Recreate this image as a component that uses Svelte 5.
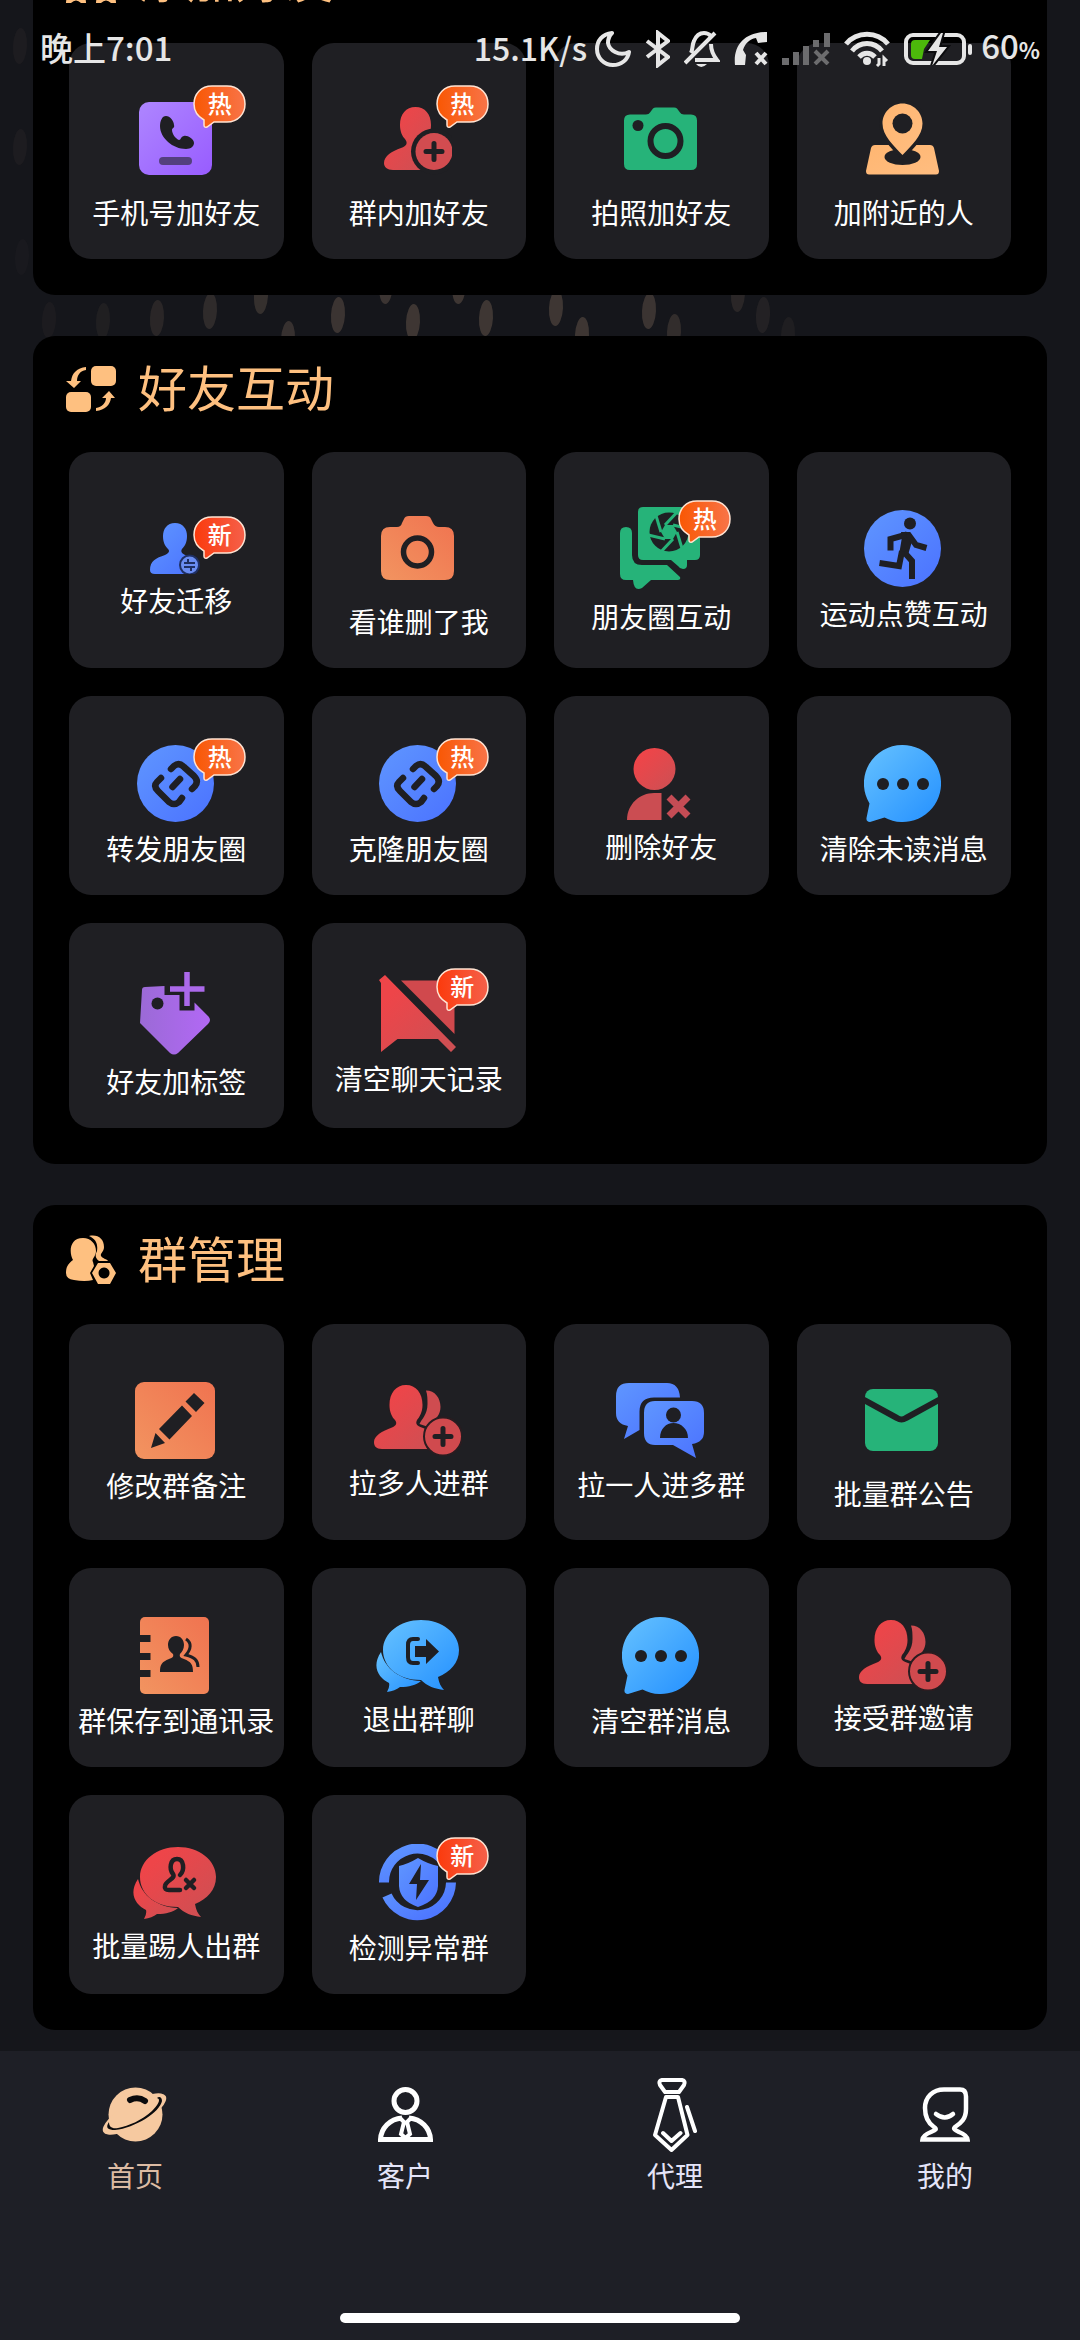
<script lang="ts">
	import { onMount } from 'svelte';

	type Tool = { icon: string; label: string; w: number; h: number; badge?: string };
	type Section = { title: string; icon: string; iconHeight: number; tools: Tool[] };

	const sections: Section[] = [
		{
			title: '添加好友',
			icon: 'add',
			iconHeight: 46,
			tools: [
				{ icon: 'phone', label: '手机号加好友', w: 73, h: 94, badge: '热' },
				{ icon: 'person-add', label: '群内加好友', w: 68, h: 94, badge: '热' },
				{ icon: 'camera-green', label: '拍照加好友', w: 73, h: 94 },
				{ icon: 'nearby', label: '加附近的人', w: 73, h: 94 }
			]
		},
		{
			title: '好友互动',
			icon: 'interact',
			iconHeight: 46,
			tools: [
				{ icon: 'migrate', label: '好友迁移', w: 50, h: 51, badge: '新' },
				{ icon: 'camera-orange', label: '看谁删了我', w: 73, h: 94 },
				{ icon: 'moments', label: '朋友圈互动', w: 80, h: 83, badge: '热' },
				{ icon: 'run', label: '运动点赞互动', w: 77, h: 77 },
				{ icon: 'link', label: '转发朋友圈', w: 77, h: 77, badge: '热' },
				{ icon: 'link', label: '克隆朋友圈', w: 77, h: 77, badge: '热' },
				{ icon: 'person-delete', label: '删除好友', w: 67, h: 72 },
				{ icon: 'message', label: '清除未读消息', w: 77, h: 77 },
				{ icon: 'tag', label: '好友加标签', w: 70, h: 83 },
				{ icon: 'chat-off', label: '清空聊天记录', w: 77, h: 77, badge: '新' }
			]
		},
		{
			title: '群管理',
			icon: 'manage',
			iconHeight: 49,
			tools: [
				{ icon: 'edit', label: '修改群备注', w: 80, h: 77 },
				{ icon: 'group-add', label: '拉多人进群', w: 88, h: 71 },
				{ icon: 'group-pull', label: '拉一人进多群', w: 88, h: 75 },
				{ icon: 'mail', label: '批量群公告', w: 75, h: 94 },
				{ icon: 'book', label: '群保存到通讯录', w: 71, h: 77 },
				{ icon: 'exit', label: '退出群聊', w: 83, h: 72 },
				{ icon: 'message', label: '清空群消息', w: 77, h: 77 },
				{ icon: 'group-add', label: '接受群邀请', w: 88, h: 71 },
				{ icon: 'kick', label: '批量踢人出群', w: 85, h: 72 },
				{ icon: 'shield', label: '检测异常群', w: 77, h: 77, badge: '新' }
			]
		}
	];

	const tabs = [
		{ id: 'home', label: '首页', w: 67, h: 55 },
		{ id: 'client', label: '客户', w: 55, h: 55 },
		{ id: 'agent', label: '代理', w: 44, h: 74 },
		{ id: 'me', label: '我的', w: 50, h: 55 }
	];

	// x, y, opacity of the soft marks behind the panels
	const marks = [
		[20, 46, 0.06], [20, 147, 0.06], [22, 257, 0.03],
		[49, 320, 0.05], [103, 321, 0.08], [157, 318, 0.14], [210, 311, 0.18],
		[261, 296, 0.22], [288, 339, 0.24], [338, 315, 0.26], [386, 286, 0.26],
		[413, 322, 0.28], [459, 286, 0.28], [486, 318, 0.28], [556, 308, 0.28],
		[582, 335, 0.28], [649, 311, 0.26], [674, 332, 0.2], [738, 294, 0.14],
		[763, 315, 0.1], [788, 335, 0.07]
	];

	const blades = [0, 1, 2, 3, 4, 5].map((k) => {
		const a = (k * Math.PI) / 3;
		const b = a + 0.9;
		return {
			x1: 49 + 8 * Math.cos(a),
			y1: 25 + 8 * Math.sin(a),
			x2: 49 + 21 * Math.cos(b),
			y2: 25 + 21 * Math.sin(b)
		};
	});

	let active = $state('home');
	let content: HTMLElement;

	onMount(() => {
		content.scrollTop = content.scrollHeight;
	});
</script>

<svg class="defs" width="0" height="0" aria-hidden="true">
	<defs>
		<linearGradient id="purple" x1="0" y1="0" x2="1" y2="1">
			<stop offset="0" stop-color="#ae86ff" /><stop offset="1" stop-color="#985cff" />
		</linearGradient>
		<linearGradient id="red" x1="0" y1="0" x2="1" y2="1">
			<stop offset="0.2" stop-color="#ee4549" /><stop offset="1" stop-color="#cb5054" />
		</linearGradient>
		<linearGradient id="blue" x1="0" y1="0" x2="1" y2="1">
			<stop offset="0" stop-color="#5f96ff" /><stop offset="1" stop-color="#4b72ff" />
		</linearGradient>
		<linearGradient id="sky" x1="0" y1="0" x2="1" y2="1">
			<stop offset="0" stop-color="#66c2ff" /><stop offset="1" stop-color="#2490ff" />
		</linearGradient>
		<linearGradient id="orange" x1="0" y1="1" x2="1" y2="0">
			<stop offset="0" stop-color="#f29460" /><stop offset="1" stop-color="#f07350" />
		</linearGradient>
		<linearGradient id="peach" x1="0" y1="0" x2="1" y2="1">
			<stop offset="0" stop-color="#ffb671" /><stop offset="1" stop-color="#ffbd80" />
		</linearGradient>
		<linearGradient id="violet" x1="0" y1="0" x2="1" y2="0">
			<stop offset="0" stop-color="#9b6ad6" /><stop offset="1" stop-color="#b268f5" />
		</linearGradient>
		<linearGradient id="hot" x1="0" y1="0" x2="1" y2="0">
			<stop offset="0" stop-color="#f95703" /><stop offset="1" stop-color="#f87448" />
		</linearGradient>
		<linearGradient id="new" x1="0" y1="0" x2="1" y2="0">
			<stop offset="0" stop-color="#fb3a0c" /><stop offset="1" stop-color="#f5604a" />
		</linearGradient>
	</defs>
</svg>

{#snippet bubbles(fill: string)}
	<path {fill} d="M5 32C-5 47 3 58 13 63q1 4-2 9 8-1 13-5c9 0 16-2 21-6C24 60 9 49 5 32z" />
	<path
		{fill}
		d="M45 0c21 0 38 13 38 30 0 13-9 22-21 27 1 6 3 10 6 13-9-1-17-4-23-10C22 60 7 47 7 30S24 0 45 0z"
	/>
{/snippet}

{#snippet toolIcon(name: string)}
	{#if name === 'phone'}
		<rect y="10" width="73" height="73" rx="10" fill="url(#purple)" />
		<path
			class="cut"
			d="M27 24c-4 0-6 5-6 10 0 12 13 23 26 23 5 0 8-3 8-6 0-4-7-8-10-7-3 0-3 4-5 4-3-1-7-6-7-10 0-2 3-2 2-5 0-4-4-9-8-9z"
		/>
		<rect x="20" y="65" width="33" height="8" rx="4" fill="#54407e" />
	{:else if name === 'person-add'}
		<path
			fill="url(#red)"
			d="M31.500 15C41 15 47 22 47 33c0 8-3 12-6 16l-3 29H9c-6 0-9-3-9-7 0-7 8-12 17-15 6-2 7-5 4-9-3-3-5-8-5-14 0-11 6-18 15.500-18z"
		/>
		<circle class="cut" cx="50" cy="59.500" r="23" />
		<circle cx="50" cy="59.500" r="18.500" fill="#d24c50" />
		<path class="cut-line" stroke-width="5" d="M42 59.500h16M50 51.500v16" />
	{:else if name === 'camera-green'}
		<path
			fill="#26b379"
			d="M6 22.500h16q3 0 4-2l3-4q1-1 3-1h18q2 0 3 1l3 4q1 2 4 2h7q6 0 6 6V72q0 6-6 6H6q-6 0-6-6V28.500q0-6 6-6z"
		/>
		<circle class="cut" cx="14" cy="33.500" r="5.500" />
		<circle class="cut-line" cx="41.500" cy="49" r="15" stroke-width="6" />
	{:else if name === 'nearby'}
		<path fill="url(#peach)" d="M9 53h55q3 0 4 3l5 23q0 3.500-3 3.500H3q-3 0-3-3.500l5-23q1-3 4-3z" />
		<ellipse class="cut" cx="36.500" cy="65" rx="18" ry="8" />
		<path
			fill="url(#peach)"
			stroke="#1f1f23"
			stroke-width="7"
			paint-order="stroke"
			d="M36.500 11.500c11 0 20 9 20 20 0 12-11 22-20 31.500-9-9.500-20-19.500-20-31.500 0-11 9-20 20-20z"
		/>
		<circle class="cut" cx="36.500" cy="31.500" r="10" />
	{:else if name === 'migrate'}
		<path
			fill="url(#blue)"
			d="M25 0c8 0 12 6 12 13 0 6-2 10-5 13-2 3 1 5 3 6 8 3 11 6 12 11l-4 8H5q-5 0-5-4c0-9 6-12 15-15 4-2 5-4 3-6-3-3-5-7-5-13C13 6 17 0 25 0z"
		/>
		<circle cx="39.500" cy="42" r="9.500" fill="#6a8df2" stroke="#1f2f62" stroke-width="2" />
		<path fill="none" stroke="#1f2f62" stroke-width="2" d="M34 40h11M38 36v4M34 44h11M41 44v4" />
	{:else if name === 'camera-orange'}
		<path
			fill="url(#orange)"
			d="M9 26h7q4 0 5-4l2-4q1-3 5-3h17q4 0 5 3l2 4q2 4 6 4h6q9 0 9 9v35q0 9-9 9H9q-9 0-9-9V35q0-9 9-9z"
		/>
		<circle class="cut-line" cx="36.500" cy="51" r="14" stroke-width="5.500" />
	{:else if name === 'moments'}
		<g fill="#26b379">
			<path d="M23 0h52q5 0 5 5v43q0 5-5 5h-8v5q0 4-4 4-3 0-5-3l-7-6H23q-5 0-5-5V5q0-5 5-5z" />
			<path
				d="M6 20q6 0 6 6v22q0 10 10 10h25l13 12q1 3-2 3H31l-9 8q-8 4-9-8H6q-6 0-6-6V26q0-6 6-6z"
			/>
		</g>
		<circle class="cut" cx="49" cy="25" r="19.500" />
		<path fill="#26b379" d="M57 25l-4 7h-8l-4-7 4-7h8z" />
		{#each blades as b}
			<line x1={b.x1} y1={b.y1} x2={b.x2} y2={b.y2} stroke="#26b379" stroke-width="3" />
		{/each}
	{:else if name === 'run'}
		<circle cx="38.500" cy="38.500" r="38.500" fill="url(#blue)" />
		<circle class="cut" cx="46" cy="13.500" r="6" />
		<path class="cut" d="M37 22h9l3 6-5 17h-9l3-18z" />
		<g fill="none" stroke="#1f1f23" stroke-width="6">
			<path d="M43 24.500L26.500 29v11.500" />
			<path d="M44 24l8 11 10.500 3" />
			<path d="M40 42l8 9v18" />
			<path d="M38 41l-3 15-19.500-3" />
		</g>
	{:else if name === 'link'}
		<circle cx="38.500" cy="38.500" r="38.500" fill="url(#blue)" />
		<g class="cut-line" stroke-width="6.500">
			<path d="M34 24l3-3q5-4 10 1l10 9q5 5 1 10l-3 3" />
			<path d="M24 33l-4 4q-4 4 1 9l11 11q5 4 10 0l3-4" />
			<path d="M35.500 42l7.500-8" />
		</g>
	{:else if name === 'person-delete'}
		<circle cx="27.500" cy="21" r="21" fill="url(#red)" />
		<path fill="#cb4d52" d="M0 72c0-16 13-27 27-27h7.500v27z" />
		<path fill="none" stroke="#c54c55" stroke-width="7" d="M42 49l19 19M61 49L42 68" />
	{:else if name === 'message'}
		<path
			fill="url(#sky)"
			d="M38.500 0a38.500 38.500 0 1 1-18 72.500L6 77q-4 0-3.500-4l3-14.500A38.500 38.500 0 0 1 38.500 0z"
		/>
		<circle class="cut" cx="19" cy="39" r="6" />
		<circle class="cut" cx="39" cy="39" r="6" />
		<circle class="cut" cx="59" cy="39" r="6" />
	{:else if name === 'tag'}
		<path
			fill="url(#violet)"
			d="M5 15l19.500-1v9H39.500v15.500h15v-8L68 44q4 4 0 8L38 81q-4 3-8 0L0 51l2-33q0-3 3-3z"
		/>
		<circle class="cut" cx="17.500" cy="31.500" r="6" />
		<path stroke="#ab69ea" stroke-width="5.500" d="M47 0v34M30 17h34.500" />
	{:else if name === 'chat-off'}
		<path fill="url(#red)" d="M2 8L0 5l6-5 71 72-5 5-13-13H18.500L2 77z" />
		<path fill="#d0494d" d="M22 5.500h53.500V59z" />
	{:else if name === 'edit'}
		<rect width="80" height="77" rx="9" fill="url(#orange)" />
		<path
			class="cut"
			d="M59 11l10.500 10L61 30 50.500 19.500zM47 23.500L57 34 34.500 57.500 24 47zM20.500 51L30 61l-14 5z"
		/>
	{:else if name === 'group-add'}
		<path
			fill="#cf4c50"
			d="M52 5.500c9 0 14.500 7.500 14.500 16.500 0 8-5 12-9 15l-3 5-9-3c2-5 8-9 8-20 0-5 0-9-1.500-13.500z"
		/>
		<path
			fill="url(#red)"
			stroke="#2a1c20"
			stroke-width="2"
			paint-order="stroke"
			d="M32 0c10 0 16.500 8 16.500 20 0 7-3 12-5.500 15-2 4 0 6 6 8l17 7v14H8c-6 0-8-3-8-7 0-6 8-11 18-14.500 5-2 5-5 3-7.500-3-3-5.500-8-5.500-15C15.500 8 22 0 32 0z"
		/>
		<circle cx="69" cy="51.500" r="19" fill="#d04a4e" stroke="#2a1c20" stroke-width="2" />
		<path class="cut-line" stroke-width="5" d="M61 51.500h16M69 43.500v16" />
	{:else if name === 'group-pull'}
		<path
			fill="url(#blue)"
			d="M13 0h38q12 0 13 14.500H38q-14.500 0-14.500 14V47L8 56l4-13Q0 41 0 30V13Q0 0 13 0z"
		/>
		<path
			fill="url(#blue)"
			d="M39 18h37q12 0 12 12v19q0 10-12 12l4 14-23-13H39q-11 0-11-12V30q0-12 11-12z"
		/>
		<circle class="cut" cx="57.500" cy="32" r="7.500" />
		<path class="cut" d="M44 55c0-9 6-15 13.500-15S72 46 72 55z" />
	{:else if name === 'mail'}
		<rect y="16" width="73" height="62" rx="8" fill="#26b379" />
		<path class="cut-line" stroke-width="6" d="M-1 27l33 18q4.500 3 9 0l33-18" />
	{:else if name === 'book'}
		<rect width="69" height="77" rx="5" fill="url(#orange)" />
		<path class="cut" d="M0 18h10.500v7H0zM0 36h10.500v7H0zM0 53h10.500v7H0z" />
		<path
			class="cut"
			d="M36 19c5 0 8 4 8 9 0 4-2 7-4 9-1 3 1 4 4 5 7 3 9 5 9 13H20c0-8 2-10 9-13 3-1 5-2 4-5-3-2-5-5-5-9 0-5 3-9 8-9z"
		/>
		<path fill="none" stroke="#1f1f23" stroke-width="3" d="M46 22c6 4 5 10 0 16 8 2 12 5 12 12" />
	{:else if name === 'exit'}
		{@render bubbles('url(#sky)')}
		<path class="cut-line" stroke-width="4" d="M42 19h-5q-5 0-5 6v12q0 6 5 6h5" />
		<path class="cut" d="M39 26h11v-7l13 12.500L50 44v-7H39z" />
	{:else if name === 'kick'}
		{@render bubbles('url(#red)')}
		<path
			class="cut-line"
			stroke-width="4.500"
			d="M47 28c5-5 4-16-3-16s-8 10-4 15c3 5-7 6-8 12q-1 4 4 4h11M53 33l8 8M61 33l-8 8"
		/>
	{:else if name === 'shield'}
		<g fill="none" stroke="url(#blue)" stroke-width="10">
			<path d="M5 38.500a33.500 33.500 0 0 1 62-18" />
			<path d="M72 38.500A33.500 33.500 0 0 1 8 51.500" />
		</g>
		<path fill="url(#blue)" d="M39 14q10 6 20 8v20q-1 15-20 21-18-6-19-21V22q9-2 19-8z" />
		<path class="cut" d="M42 20L30 40h8l-1 16 13-20h-9z" />
	{/if}
{/snippet}

<div class="screen">
	<svg class="marks" aria-hidden="true">
		{#each marks as [x, y, o]}
			<ellipse cx={x} cy={y} rx="7" ry="18" fill="#a98b74" opacity={o} transform="rotate(3 {x} {y})" />
		{/each}
	</svg>

	<header class="status">
		<span class="status-text">晚上7:01</span>
		<div class="status-right">
			<span class="status-text speed">15.1K/s</span>
			<svg width="36" height="36" viewBox="0 0 36 36" fill="none" stroke="currentColor" stroke-width="4" stroke-linejoin="round">
				<path d="M17 2C7 3 2 10 2 18c0 9 7 16 16 16 8 0 15-5 16-13-10 5-20-2-21-9 0-4 1-7 4-10z" />
			</svg>
			<svg width="25" height="38" viewBox="0 0 25 38" fill="none" stroke="currentColor" stroke-width="4">
				<path d="M2 11l21 16-10 8V3l10 8L2 27" />
			</svg>
			<svg width="36" height="38" viewBox="0 0 36 38" fill="none" stroke="currentColor" stroke-width="4">
				<path d="M7 23c2-4 1-8 3-12 2-5 5-8 10-8 3 0 5 1 7 3M27 14c0 7 2 11 6 16H11M1 33L31 3" />
				<path d="M12 34q5 6 11 0z" fill="currentColor" stroke="none" />
			</svg>
			<svg width="34" height="36" viewBox="0 0 34 36" fill="currentColor">
				<path d="M1 34C-1 15 10 1 33 1v10l-9 1-2-5C15 8 11 13 9 19l3 5-1 10z" />
				<path d="M22 22l10 11M32 22L22 33" fill="none" stroke="currentColor" stroke-width="4" />
			</svg>
			<svg class="signal" width="48" height="32" viewBox="0 0 48 32" fill="currentColor">
				<path d="M0 25h7v7H0zM11 19h6v13h-6zM21 13h6v19h-6zM31 7h6v7h-6zM42 0h6v14h-6z" />
				<path d="M33 18l13 13M46 18L33 31" fill="none" stroke="currentColor" stroke-width="4" />
			</svg>
			<svg width="46" height="36" viewBox="0 0 46 36" fill="none" stroke="currentColor" stroke-width="5">
				<path d="M2 13C13 0 33 0 44 13M8 20c8-10 22-10 30 0M15 26c5-5 11-5 16 0" />
				<circle cx="23" cy="30" r="4" fill="currentColor" stroke="none" />
				<path d="M33 35l2-2v-6M40 35v-8l3 3" stroke-width="3" />
			</svg>
			<svg width="69" height="32" viewBox="0 0 69 32" fill="none">
				<rect x="2" y="2" width="58" height="28" rx="7" stroke="currentColor" stroke-width="4" />
				<path d="M11 7h15l-6 9-2 10h-7q-4 0-4-4V11q0-4 4-4z" fill="#4cb80b" />
				<path
					d="M37 0L24 18h9l-5 15 15-19h-8l4-14z"
					fill="currentColor"
					stroke="#0c0c0e"
					stroke-width="4"
					paint-order="stroke"
				/>
				<rect x="64" y="11" width="4" height="11" rx="2" fill="currentColor" />
			</svg>
			<span class="status-text battery">60<small>%</small></span>
		</div>
	</header>

	<main class="content" bind:this={content}>
		{#each sections as section}
			<section class="panel">
				<h2 class="panel-title">
					<svg width="50" height={section.iconHeight} viewBox="0 0 50 {section.iconHeight}" fill="#fec080" aria-hidden="true">
						{#if section.icon === 'interact'}
							<rect x="25" width="25" height="20" rx="5" />
							<rect y="26" width="25" height="20" rx="5" />
							<path d="M0 15h5C6 7 11 2 20 1v3c-6 1-9 5-9 11h4l-7 7z" />
							<path d="M49 32h-4c-1 7-6 12-15 13v-3c6-1 10-5 10-10h-4l7-7z" />
						{:else if section.icon === 'manage'}
							<path d="M23 1c9-2 15 3 15 11 0 5-4 6-3 9 2 3 6 3 7 5h-9c-4-3-4-6-2-10 1-7-1-12-8-15z" />
							<path
								d="M17 3c8 0 13 6 13 13 0 6-5 8-3 11l1 4-4 7 3 7q-8 2-19 0Q0 44 0 38c0-7 3-10 7-13-4-7-4-22 10-22z"
							/>
							<path fill-rule="evenodd" d="M32 28h12l6 10-6 11H32l-6-11zM38 32.500a5.500 5.500 0 1 0 .1 0z" />
						{:else}
							<circle cx="8" cy="24" r="8" />
							<circle cx="41" cy="24" r="8" />
							<path d="M0 46c0-15 20-15 20 0h-5q-5-5-10 0zM30 46c0-15 20-15 20 0h-5q-5-5-10 0z" />
						{/if}
					</svg>
					<span>{section.title}</span>
				</h2>
				<div class="grid">
					{#each section.tools as tool}
						<button type="button" class="tile">
							<span class="tile-icon">
								<svg width={tool.w} height={tool.h} viewBox="0 0 {tool.w} {tool.h}" aria-hidden="true">
									{@render toolIcon(tool.icon)}
								</svg>
								{#if tool.badge}
									<span class="badge">
										<svg width="53" height="43" viewBox="0 0 53 43" aria-hidden="true">
											<path
												d="M19 1h15c11 0 18 8 18 18s-7 18-18 18H21l-7 5q-3 1-3-2v-5C4 31 1 25 1 19 1 9 8 1 19 1z"
												fill={tool.badge === '热' ? 'url(#hot)' : 'url(#new)'}
												stroke="#ffe3d2"
												stroke-width="1.500"
											/>
										</svg>
										<span class="badge-text">{tool.badge}</span>
									</span>
								{/if}
							</span>
							<span class="tile-label">{tool.label}</span>
						</button>
					{/each}
				</div>
			</section>
		{/each}
	</main>

	<nav class="tabbar">
		<div class="tabs">
			{#each tabs as tab}
				<button type="button" class="tab" class:active={active === tab.id} onclick={() => (active = tab.id)}>
					<span class="tab-icon">
						<svg width={tab.w} height={tab.h} viewBox="0 0 {tab.w} {tab.h}" fill="none" stroke="#fff" stroke-width="4.500" aria-hidden="true">
							{#if tab.id === 'home'}
								<g fill="#f6c9a0" stroke="none">
									<circle cx="33.500" cy="27.500" r="27" />
									<ellipse cx="32.500" cy="27" rx="36" ry="12" transform="rotate(-30 32.500 27)" />
								</g>
								<path
									d="M7 35c-4 6-1 8 6 8 20-2 45-18 47-29 0-4-3-5-5-3 5 1 0 8-5 13-10 9-23 15-34 17-6 1-9-1-9-6z"
									fill="#0b0b0d"
									stroke="none"
								/>
								<path d="M28 13q8-4 15 1" stroke="#0b0b0d" stroke-width="6" stroke-linecap="round" />
							{:else if tab.id === 'client'}
								<circle cx="27.500" cy="14" r="11.500" stroke-width="5" />
								<path d="M24 31C12 32 3 41 2.500 52.500h50C52 41 43 32 31 31" stroke-width="5" />
								<path d="M22 31l4 4-3 12 4.500 4 4.500-4-3-12 4-4" stroke-width="4" />
							{:else if tab.id === 'agent'}
								<g stroke-width="4" stroke-linejoin="round" stroke-linecap="round">
									<path d="M9 2h20q4 1 2 5l-5 7H12L7 7Q5 3 9 2z" />
									<path d="M13 19h12l9.500 38-16 15L2 57z" />
									<path d="M10 55l8.500 8 9-8M34 29l8 24" />
								</g>
							{:else}
								<path
									d="M24 2.500h16q6 0 6 7V22c0 10-5 14-11 18-2 2 0 3 4 5 5 2 8 4 8.500 7.500h-45C3 49 6 47 11 45c5-2 6-3 3-5C8 36 5 30 5 21 5 10 13 2.500 24 2.500z"
								/>
								<path d="M16 27q9 7 17 0" stroke-linecap="round" />
							{/if}
						</svg>
					</span>
					<span class="tab-label">{tab.label}</span>
				</button>
			{/each}
		</div>
		<div class="home-indicator"></div>
	</nav>
</div>

<style>
	:global(body) {
		background: #15161b;
	}

	.defs {
		position: absolute;
	}

	.screen {
		position: relative;
		display: flex;
		flex-direction: column;
		height: 100vh;
		overflow: hidden;
		background: #15161b;
		color: #fff;
		font-family: 'Noto Sans CJK SC', 'Noto Sans', sans-serif;
	}

	.marks {
		position: absolute;
		top: 0;
		left: 0;
		width: 100%;
		height: 400px;
	}

	.status {
		position: absolute;
		z-index: 2;
		top: 0;
		left: 0;
		right: 0;
		display: flex;
		align-items: center;
		justify-content: space-between;
		height: 98px;
		padding: 0 40px;
		color: #e6e6e6;
		font-size: 33px;
		font-weight: 500;
	}

	.status-text {
		padding-bottom: 4px;
		line-height: 40px;
	}

	.status-right {
		display: flex;
		align-items: center;
		gap: 14px;
	}

	.speed {
		margin-right: -6px;
		font-size: 32px;
	}

	.signal {
		color: #6c6c6e;
	}

	.battery {
		margin-left: -6px;
	}

	.battery small {
		font-size: 22px;
		font-weight: 700;
	}

	.content {
		position: relative;
		flex: 1;
		min-height: 0;
		box-sizing: border-box;
		overflow-y: auto;
		scrollbar-width: none;
		padding: 21px 33px;
	}

	.panel {
		padding: 30px 36px 36px;
		border-radius: 22px;
		background: #000;
	}

	.panel + .panel {
		margin-top: 41px;
	}

	.panel-title {
		display: flex;
		align-items: center;
		gap: 22px;
		margin: 0 -3px 40px;
		color: #fec080;
		font-size: 49px;
		font-weight: 400;
		line-height: 40px;
	}

	.panel-title span {
		padding-bottom: 6px;
	}

	.grid {
		display: grid;
		grid-template-columns: repeat(4, 1fr);
		gap: 28px;
	}

	.tile {
		display: flex;
		flex-direction: column;
		align-items: center;
		justify-content: center;
		min-width: 0;
		padding: 25px 0 29px;
		border: 0;
		border-radius: 22px;
		background: #1f1f23;
		color: #fff;
		font: inherit;
		cursor: pointer;
	}

	.tile-icon {
		position: relative;
		display: flex;
		justify-content: center;
		box-sizing: border-box;
		width: 100%;
		margin: 24px 0 8px;
		padding-right: 2px;
	}

	.tile-icon > svg {
		display: block;
	}

	.tile-icon :global(.cut) {
		fill: #1f1f23;
	}

	.tile-icon :global(.cut-line) {
		fill: none;
		stroke: #1f1f23;
		stroke-linecap: round;
		stroke-linejoin: round;
	}

	.tile-label {
		font-size: 28px;
		line-height: 36px;
		white-space: nowrap;
	}

	.badge {
		position: absolute;
		top: -7px;
		left: calc(50% + 17px);
		width: 53px;
		height: 43px;
	}

	.badge-text {
		position: absolute;
		top: 0;
		left: 0;
		right: 0;
		font-size: 24px;
		font-weight: 500;
		line-height: 36px;
		text-align: center;
	}

	.tabbar {
		position: relative;
		padding: 26px 0 17px;
		background: #1e1f26;
	}

	.tabs {
		display: grid;
		grid-template-columns: repeat(4, 1fr);
	}

	.tab {
		padding: 0;
		border: 0;
		background: none;
		color: #e4e4f8;
		font: inherit;
		cursor: pointer;
	}

	.tab-icon {
		display: flex;
		align-items: center;
		justify-content: center;
		height: 75px;
	}

	.tab-label {
		display: block;
		margin-top: 3px;
		font-size: 28px;
		font-weight: 400;
		line-height: 40px;
	}

	.tab.active {
		color: #dcbba3;
	}

	.home-indicator {
		width: 37%;
		height: 10px;
		margin: 118px auto 0;
		border-radius: 5px;
		background: #fff;
	}
</style>
